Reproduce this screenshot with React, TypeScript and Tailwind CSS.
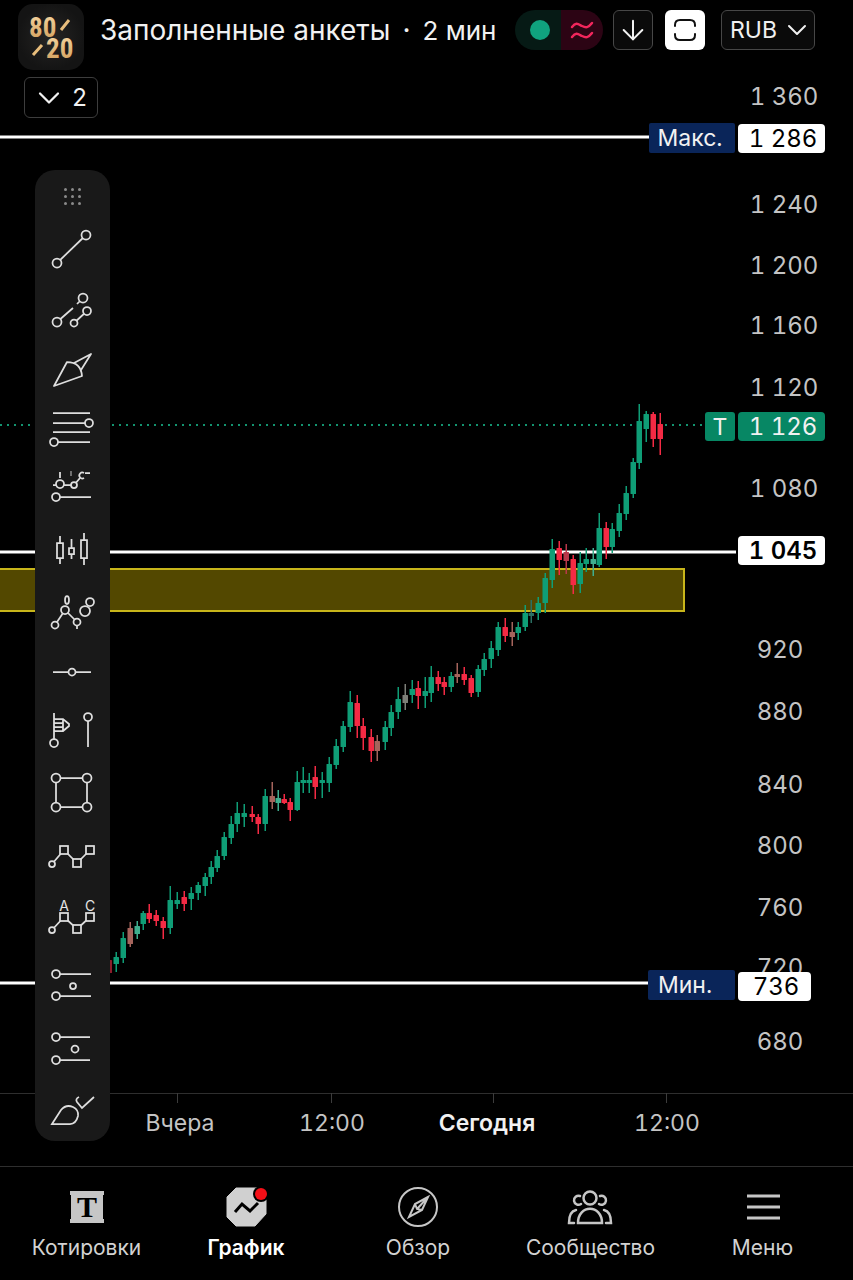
import React from 'react';
import { ArrowDown, ChevronDown } from 'lucide-react';

type Candle = [x: number, high: number, low: number, top: number, bottom: number, color: string];

const UP = '#0f9d76';
const DOWN = '#f42a44';
const MIXED = '#a5645c';
const FLAT = '#7d7f78';
const SOFT = '#3fae8e';

const candles: Candle[] = [
  [109, 959, 977, 960, 973, '#8c1d2b'], [116, 952, 972, 957, 964, UP], [123, 932, 963, 938, 958, UP],
  [130, 922, 947, 928, 944, MIXED], [137, 921, 939, 926, 934, SOFT], [143, 911, 930, 913, 924, UP],
  [149, 904, 923, 913, 919, DOWN], [156, 910, 926, 915, 921, DOWN], [163, 917, 939, 921, 928, DOWN],
  [170, 886, 934, 900, 928, UP], [177, 892, 909, 900, 904, UP], [184, 891, 911, 897, 904, DOWN],
  [191, 887, 910, 893, 899, UP], [198, 882, 900, 885, 893, UP], [205, 873, 896, 877, 886, UP],
  [211, 861, 884, 867, 877, UP], [217, 850, 872, 856, 868, UP], [224, 832, 860, 837, 856, UP],
  [231, 816, 844, 824, 838, UP], [237, 802, 832, 813, 824, UP], [244, 804, 827, 813, 817, UP],
  [252, 806, 822, 814, 817, DOWN], [258, 814, 834, 817, 824, DOWN], [265, 789, 831, 796, 824, UP],
  [272, 782, 809, 796, 802, MIXED], [278, 790, 811, 798, 803, SOFT], [284, 794, 804, 799, 803, DOWN],
  [290, 798, 821, 802, 810, DOWN], [297, 771, 811, 782, 810, UP], [303, 767, 793, 780, 783, UP],
  [309, 773, 793, 780, 783, UP], [315, 766, 799, 777, 787, DOWN], [322, 772, 798, 780, 783, UP],
  [329, 757, 792, 764, 783, UP], [336, 739, 769, 746, 765, UP], [343, 721, 752, 726, 747, UP],
  [350, 691, 732, 702, 727, UP], [357, 695, 738, 703, 726, DOWN], [363, 718, 750, 726, 738, DOWN],
  [371, 729, 762, 737, 751, DOWN], [377, 735, 761, 741, 751, MIXED], [385, 721, 750, 727, 742, UP],
  [391, 705, 736, 712, 728, UP], [398, 687, 719, 699, 712, UP], [405, 684, 710, 695, 703, FLAT],
  [412, 680, 703, 689, 695, UP], [418, 681, 709, 688, 696, DOWN], [425, 677, 708, 691, 696, UP],
  [431, 666, 702, 677, 693, UP], [438, 671, 691, 677, 684, DOWN], [444, 677, 695, 682, 687, DOWN],
  [451, 672, 692, 676, 687, UP], [457, 663, 683, 674, 677, MIXED], [464, 667, 685, 674, 680, DOWN],
  [471, 675, 697, 678, 693, DOWN], [478, 665, 697, 669, 692, UP], [484, 653, 676, 659, 670, UP],
  [491, 641, 668, 648, 659, UP], [498, 622, 656, 627, 650, UP], [505, 618, 642, 627, 636, DOWN],
  [512, 622, 646, 632, 637, MIXED], [518, 622, 640, 627, 633, UP], [525, 605, 631, 613, 627, UP],
  [531, 600, 623, 613, 616, '#2b6f62'], [538, 597, 620, 603, 613, UP], [545, 573, 613, 578, 603, UP],
  [552, 539, 588, 549, 580, UP], [559, 541, 575, 548, 560, DOWN], [566, 544, 574, 552, 561, '#b8384a'],
  [573, 555, 594, 559, 585, DOWN], [580, 552, 593, 563, 584, UP], [586, 548, 572, 559, 564, UP],
  [593, 548, 576, 559, 564, SOFT], [599, 513, 567, 528, 565, UP], [606, 522, 559, 528, 547, DOWN],
  [612, 523, 553, 529, 547, UP], [619, 504, 537, 513, 531, UP], [626, 486, 520, 493, 514, UP],
  [633, 458, 498, 462, 494, UP], [639, 404, 469, 421, 463, UP], [646, 411, 442, 414, 429, UP],
  [653, 412, 447, 414, 439, DOWN], [660, 413, 455, 424, 439, DOWN],
];

const priceLabels = [
  { text: '1 360', x: 784, y: 105 },
  { text: '1 240', x: 784, y: 213 },
  { text: '1 200', x: 784, y: 274 },
  { text: '1 160', x: 784, y: 334 },
  { text: '1 120', x: 784, y: 396 },
  { text: '1 080', x: 784, y: 497 },
  { text: '920', x: 780, y: 658 },
  { text: '880', x: 780, y: 720 },
  { text: '840', x: 780, y: 793 },
  { text: '800', x: 780, y: 854 },
  { text: '760', x: 780, y: 916 },
  { text: '720', x: 780, y: 976 },
  { text: '680', x: 780, y: 1050 },
];

const timeLabels = [
  { text: 'Вчера', x: 180, tick: 177, strong: false },
  { text: '12:00', x: 332, tick: 331, strong: false },
  { text: 'Сегодня', x: 487, tick: 493, strong: true },
  { text: '12:00', x: 667, tick: 666, strong: false },
];

const Dot = ({ x, y, r = 4 }: { x: number; y: number; r?: number }) => (
  <circle cx={x} cy={y} r={r} fill="#191919" />
);

const Square = ({ x, y }: { x: number; y: number }) => (
  <rect x={x - 4} y={y - 4} width="8" height="8" fill="#191919" />
);

const tools = [
  { name: 'Линия тренда', icon: <><path d="M22 45 51 17" /><Dot x={51} y={17} r={4.5} /><Dot x={22} y={45} r={4.5} /></> },
  {
    name: 'Параллельный канал',
    icon: <><path d="M22 43 38 29M42 25l6-6M39 44 52 32" /><Dot x={48} y={19} r={4.5} /><Dot x={52} y={32} /><Dot x={39} y={44} r={3.5} /><Dot x={22} y={43} r={4.5} /></>,
  },
  { name: 'Перо', icon: <path d="M19 46 32 22Q46 22 47 36ZM39 23 56 14 46 30" strokeLinejoin="round" /> },
  {
    name: 'Уровни Фибоначчи',
    icon: <><path d="M18 12H55M18 22H54M18 31H55M19 41H55" /><Dot x={54} y={22} /><Dot x={19} y={41} /></>,
  },
  {
    name: 'Проекция',
    icon: <><path d="M21 35H56M18 23H39L45 16M25 10v6" /><path d="M36 9v5" opacity="0.5" /><path d="M49 11a3 3 0 1 0 0 5M50 11H55" /><Dot x={25} y={22} /><Dot x={39} y={23} r={3} /><Dot x={21} y={35} /></>,
  },
  {
    name: 'Свечи',
    icon: <path d="M22 20h6v15h-6ZM25 13v7M25 35v6M34 25h5v6h-5ZM36.5 16v9M36.5 31v5M46 17h6v18h-6ZM49 10v7M49 35v7" />,
  },
  {
    name: 'Паттерн',
    icon: <><path d="M20 41 30 26 42 38v7" /><ellipse cx="32" cy="16" rx="2" ry="4" /><Dot x={20} y={41} r={3.5} /><Dot x={30} y={26} /><Dot x={42} y={38} r={3.5} /><Dot x={50} y={27} r={5} /><Dot x={55} y={18} r={4} /></>,
  },
  { name: 'Горизонтальная линия', icon: <><path d="M18 27H56" /><Dot x={37} y={27} r={3.5} /></> },
  {
    name: 'Вертикальная линия',
    icon: <><path d="M19 7V37M19 13h9l6 5v2l-6 5h-9M19 17h9M19 21h9M28 13v12M53 11V41" /><Dot x={19} y={37} /><Dot x={53} y={11} /></>,
  },
  {
    name: 'Прямоугольник',
    icon: <><path d="M21 11H52V40H21Z" /><Dot x={21} y={11} r={4.5} /><Dot x={52} y={11} r={4.5} /><Dot x={21} y={40} r={4.5} /><Dot x={52} y={40} r={4.5} /></>,
  },
  {
    name: 'Ломаная',
    icon: <><path d="M17 36 29 22 42 35 55 22" /><Dot x={17} y={36} r={3} /><Square x={29} y={22} /><Square x={42} y={35} /><Square x={55} y={22} /></>,
  },
  {
    name: 'Волна ABC',
    icon: (
      <>
        <path d="M17 41 29 28 42 40 55 28" /><Dot x={17} y={41} r={3} /><Square x={29} y={28} /><Square x={42} y={40} /><Square x={55} y={28} />
        <text x="29" y="22" fontSize="14" textAnchor="middle" fill="#e4e4e4" stroke="none">A</text>
        <text x="55" y="22" fontSize="14" textAnchor="middle" fill="#e4e4e4" stroke="none">C</text>
      </>
    ),
  },
  {
    name: 'Длинная позиция',
    icon: <><path d="M21 24H56M21 46H56" /><Dot x={21} y={24} /><Dot x={38} y={36} r={3} /><Dot x={21} y={46} /></>,
  },
  {
    name: 'Короткая позиция',
    icon: <><path d="M21 26H55M21 49H55" /><Dot x={21} y={26} /><Dot x={40} y={38} r={3.5} /><Dot x={21} y={49} /></>,
  },
  { name: 'Кисть', icon: <path d="M17 52 26 38Q31 32 38 35 44 38 43 44 41 52 35 52ZM44 25Q40 27 42 30L47 36 59 25" /> },
];

const navItems = [
  {
    label: 'Котировки',
    icon: (
      <>
        <path d="M7 8h34v4h-1v24h1v4H7v-4h1V12H7Z" fill="#c6c6c6" />
        <text x="24" y="34" fontSize="30" fontWeight="700" textAnchor="middle" fill="#000" className="font-['Liberation_Serif',serif]">T</text>
      </>
    ),
  },
  {
    label: 'График',
    active: true,
    icon: (
      <>
        <path d="M14 5h22l8 8v18L33 43H14L5 34V14Z" fill="#d0d0d0" stroke="#d0d0d0" strokeLinejoin="round" />
        <path d="m13 29 7-8 8 7 8-8" fill="none" stroke="#000" strokeWidth="3" />
        <circle cx="39" cy="11" r="8" fill="#000" />
        <circle cx="39" cy="11" r="6" fill="#f50f17" />
      </>
    ),
  },
  {
    label: 'Обзор',
    icon: (
      <g fill="none" stroke="#c6c6c6" strokeWidth="2">
        <circle cx="24" cy="24" r="19" />
        <path d="m34 14-13 7-6 13 13-7ZM21 21l2 5 5 1M23 26 34 14" />
      </g>
    ),
  },
  {
    label: 'Сообщество',
    icon: (
      <g fill="none" stroke="#c6c6c6" strokeWidth="2.500" strokeLinecap="round">
        <circle cx="23" cy="15" r="6.5" />
        <path d="M13 13a4.500 4.500 0 1 0 1 8M33 13a4.500 4.500 0 1 1-1 8" />
        <path d="M11 40c0-19 24-19 24 0ZM7 40H2c0-8 2-12 7-13M39 40h5c0-8-2-12-7-13" />
      </g>
    ),
  },
  {
    label: 'Меню',
    icon: <path d="M8 13H41M8 24H41M8 35H41" stroke="#c6c6c6" strokeWidth="3" />,
  },
];

const Logo = () => (
  <svg viewBox="0 0 66 66" className="h-[66px] w-[66px] shrink-0 font-['Roboto_Condensed','Liberation_Sans',sans-serif]" role="img" aria-label="80/20">
    <defs>
      <linearGradient id="gold" x1="0" y1="0" x2="0" y2="1">
        <stop offset="0%" stopColor="#f6d9a6" />
        <stop offset="100%" stopColor="#d09a55" />
      </linearGradient>
      <radialGradient id="tile">
        <stop offset="0%" stopColor="#262524" />
        <stop offset="100%" stopColor="#141414" />
      </radialGradient>
    </defs>
    <rect width="66" height="66" rx="15" fill="url(#tile)" />
    <text x="11" y="33" fontSize="27" fontWeight="700" fill="url(#gold)">80</text>
    <text x="28" y="54" fontSize="27" fontWeight="700" fill="url(#gold)">20</text>
    <path d="m43 26 8-10M15 51l9-10" stroke="#e8bd7c" strokeWidth="3" />
  </svg>
);

const Header = () => (
  <header className="flex h-[72px] items-start pt-1 pr-[38px] pl-[18px]">
    <Logo />
    <div className="ml-4 flex flex-1 items-center pt-1.5">
      <h1 className="flex h-10 flex-1 items-center gap-3 text-[28px] whitespace-nowrap text-[#f1f1f1]">
        <span>Заполненные анкеты</span>
        <span>·</span>
        <span className="text-[26px]">2 мин</span>
      </h1>
      <div className="flex h-10 w-[88px] overflow-hidden rounded-full">
        <button type="button" aria-label="Статус торгов" className="flex flex-1 items-center justify-center bg-[#061a15] pl-1">
          <span className="h-5 w-5 rounded-full bg-[#10a37f]" />
        </button>
        <button type="button" aria-label="Волатильность" className="flex flex-1 items-center justify-center bg-[#2c0414]">
          <svg viewBox="0 0 24 20" className="h-5 w-6" fill="none" stroke="#f0265c" strokeWidth="2.500" strokeLinecap="round">
            <path d="M2 7c4-5 6-3 10-1s6 2 10-3M2 17c4-5 6-3 10-1s6 2 10-3" />
          </svg>
        </button>
      </div>
      <button type="button" aria-label="Скачать" className="ml-2.5 flex h-10 w-10 items-center justify-center rounded-md border border-[#474747] bg-[#0a0a0a]">
        <ArrowDown className="h-8 w-8 shrink-0 text-[#f1f1f1]" strokeWidth={1.5} />
      </button>
      <button type="button" aria-label="Во весь экран" className="ml-3 flex h-10 w-10 items-center justify-center rounded-md bg-white">
        <svg viewBox="0 0 24 24" className="h-6 w-6" fill="none" stroke="#111" strokeWidth="2" strokeLinecap="round">
          <path d="M2 8V7q0-5 5-5h10q5 0 5 5v1M2 16v1q0 5 5 5h10q5 0 5-5v-1" />
        </svg>
      </button>
      <div className="relative ml-4">
        <select aria-label="Валюта" className="h-10 w-[94px] appearance-none rounded-md border border-[#474747] bg-[#0a0a0a] pl-2 text-[23px] text-[#f1f1f1]">
          <option>RUB</option>
        </select>
        <ChevronDown className="pointer-events-none absolute top-1 right-0.5 h-8 w-8 text-[#f1f1f1]" strokeWidth={1.5} />
      </div>
    </div>
  </header>
);

const Chart = () => (
  <svg viewBox="0 72 853 1094" className="block h-auto w-full tabular-nums" role="img" aria-label="График цены">
    {/* levels */}
    <g stroke="#fff" strokeWidth="3">
      <path d="M0 137H650" />
      <path d="M0 552H736" />
      <path d="M0 983H649" />
    </g>
    <rect x="-2" y="569" width="686" height="42" fill="#534800" stroke="#c8b51a" strokeWidth="2" />
    <path d="M0 425H705" stroke="#139470" strokeWidth="2" strokeDasharray="2 5" />

    {candles.map(([x, high, low, top, bottom, color]) => (
      <g key={x} fill={color}>
        <rect x={x - 0.5} y={high} width="1.500" height={low - high} />
        <rect x={x - 2.5} y={top} width="5.500" height={bottom - top} rx="0.500" />
      </g>
    ))}

    {/* price axis */}
    <g fontSize="24" textAnchor="middle" fill="#c4c4c4">
      {priceLabels.map((p) => (
        <text key={p.text} x={p.x} y={p.y}>{p.text}</text>
      ))}
    </g>

    {/* price tags */}
    <g fontSize="24" textAnchor="middle">
      <rect x="649" y="123" width="86" height="30" rx="2" fill="#0a2559" />
      <text x="690" y="146" fontSize="23" fill="#f1f1f1">Макс.</text>
      <rect x="738" y="124" width="87" height="29" rx="4" fill="#fff" />
      <text x="783" y="147" fill="#000">1 286</text>

      <rect x="705" y="412" width="30" height="29" rx="3" fill="#078764" />
      <text x="720" y="435" fontSize="23" fill="#f1f1f1">T</text>
      <rect x="738" y="412" width="87" height="29" rx="4" fill="#078764" />
      <text x="783" y="435" fill="#f1f1f1">1 126</text>

      <rect x="738" y="536" width="87" height="29" rx="4" fill="#fff" />
      <text x="783" y="559" fontWeight="600" fill="#000">1 045</text>

      <rect x="648" y="970" width="87" height="30" rx="2" fill="#0a2559" />
      <text x="685" y="993" fontSize="23" fill="#f1f1f1">Мин.</text>
      <rect x="738" y="972" width="73" height="29" rx="4" fill="#fff" />
      <text x="776" y="995" fill="#000">736</text>
    </g>

    {/* time axis */}
    <path d="M0 1093.500H853" stroke="#2e2e2e" />
    {timeLabels.map((t) => (
      <g key={t.x}>
        <path d={`M${t.tick}.5 1093v10`} stroke="#3c3c3c" />
        <text x={t.x} y="1131" fontSize="23" textAnchor="middle" fontWeight={t.strong ? 600 : 400} fill={t.strong ? '#f1f1f1' : '#c4c4c4'}>
          {t.text}
        </text>
      </g>
    ))}
  </svg>
);

const Toolbar = () => (
  <div className="absolute top-[98px] left-[35px] flex w-[75px] flex-col rounded-[20px] bg-[#191919] pb-2">
    <button type="button" aria-label="Переместить панель" className="grid h-12 grid-cols-[repeat(3,3px)] place-content-center gap-1 pt-1">
      {Array.from({ length: 9 }, (_, i) => (
        <span key={i} className="h-[3px] w-[3px] rounded-full bg-[#8a8a8a]" />
      ))}
    </button>
    {tools.map((tool) => (
      <button key={tool.name} type="button" aria-label={tool.name} className="h-[61px] w-full">
        <svg viewBox="0 0 75 61" className="h-full w-full" fill="none" stroke="#dedede" strokeWidth="1.750">
          {tool.icon}
        </svg>
      </button>
    ))}
  </div>
);

const BottomNav = () => (
  <nav className="grid h-[114px] grid-cols-[157fr_162fr_182fr_163fr_181fr] border-t border-[#2e2e2e] pl-2">
    {navItems.map((item) => (
      <a key={item.label} href="#" className="flex flex-col items-center gap-px pt-4">
        <svg viewBox="0 0 48 48" className="h-12 w-12" aria-hidden="true">
          {item.icon}
        </svg>
        <span className={item.active ? 'text-[21px] font-semibold text-white' : 'text-[21px] text-[#d2d2d2]'}>{item.label}</span>
      </a>
    ))}
  </nav>
);

export default function App() {
  return (
    <div className="min-h-screen bg-black font-['Inter','Liberation_Sans',sans-serif]">
      <Header />
      <main className="relative">
        <Chart />
        <button type="button" aria-label="Индикаторы: 2" className="absolute top-[5px] left-6 flex h-[41px] w-[74px] items-center justify-between rounded-md border border-[#3d3d3d] pr-2.5 pl-1.5 text-[24px] text-[#f1f1f1]">
          <ChevronDown className="h-9 w-9" strokeWidth={1.5} />
          2
        </button>
        <Toolbar />
      </main>
      <BottomNav />
    </div>
  );
}
